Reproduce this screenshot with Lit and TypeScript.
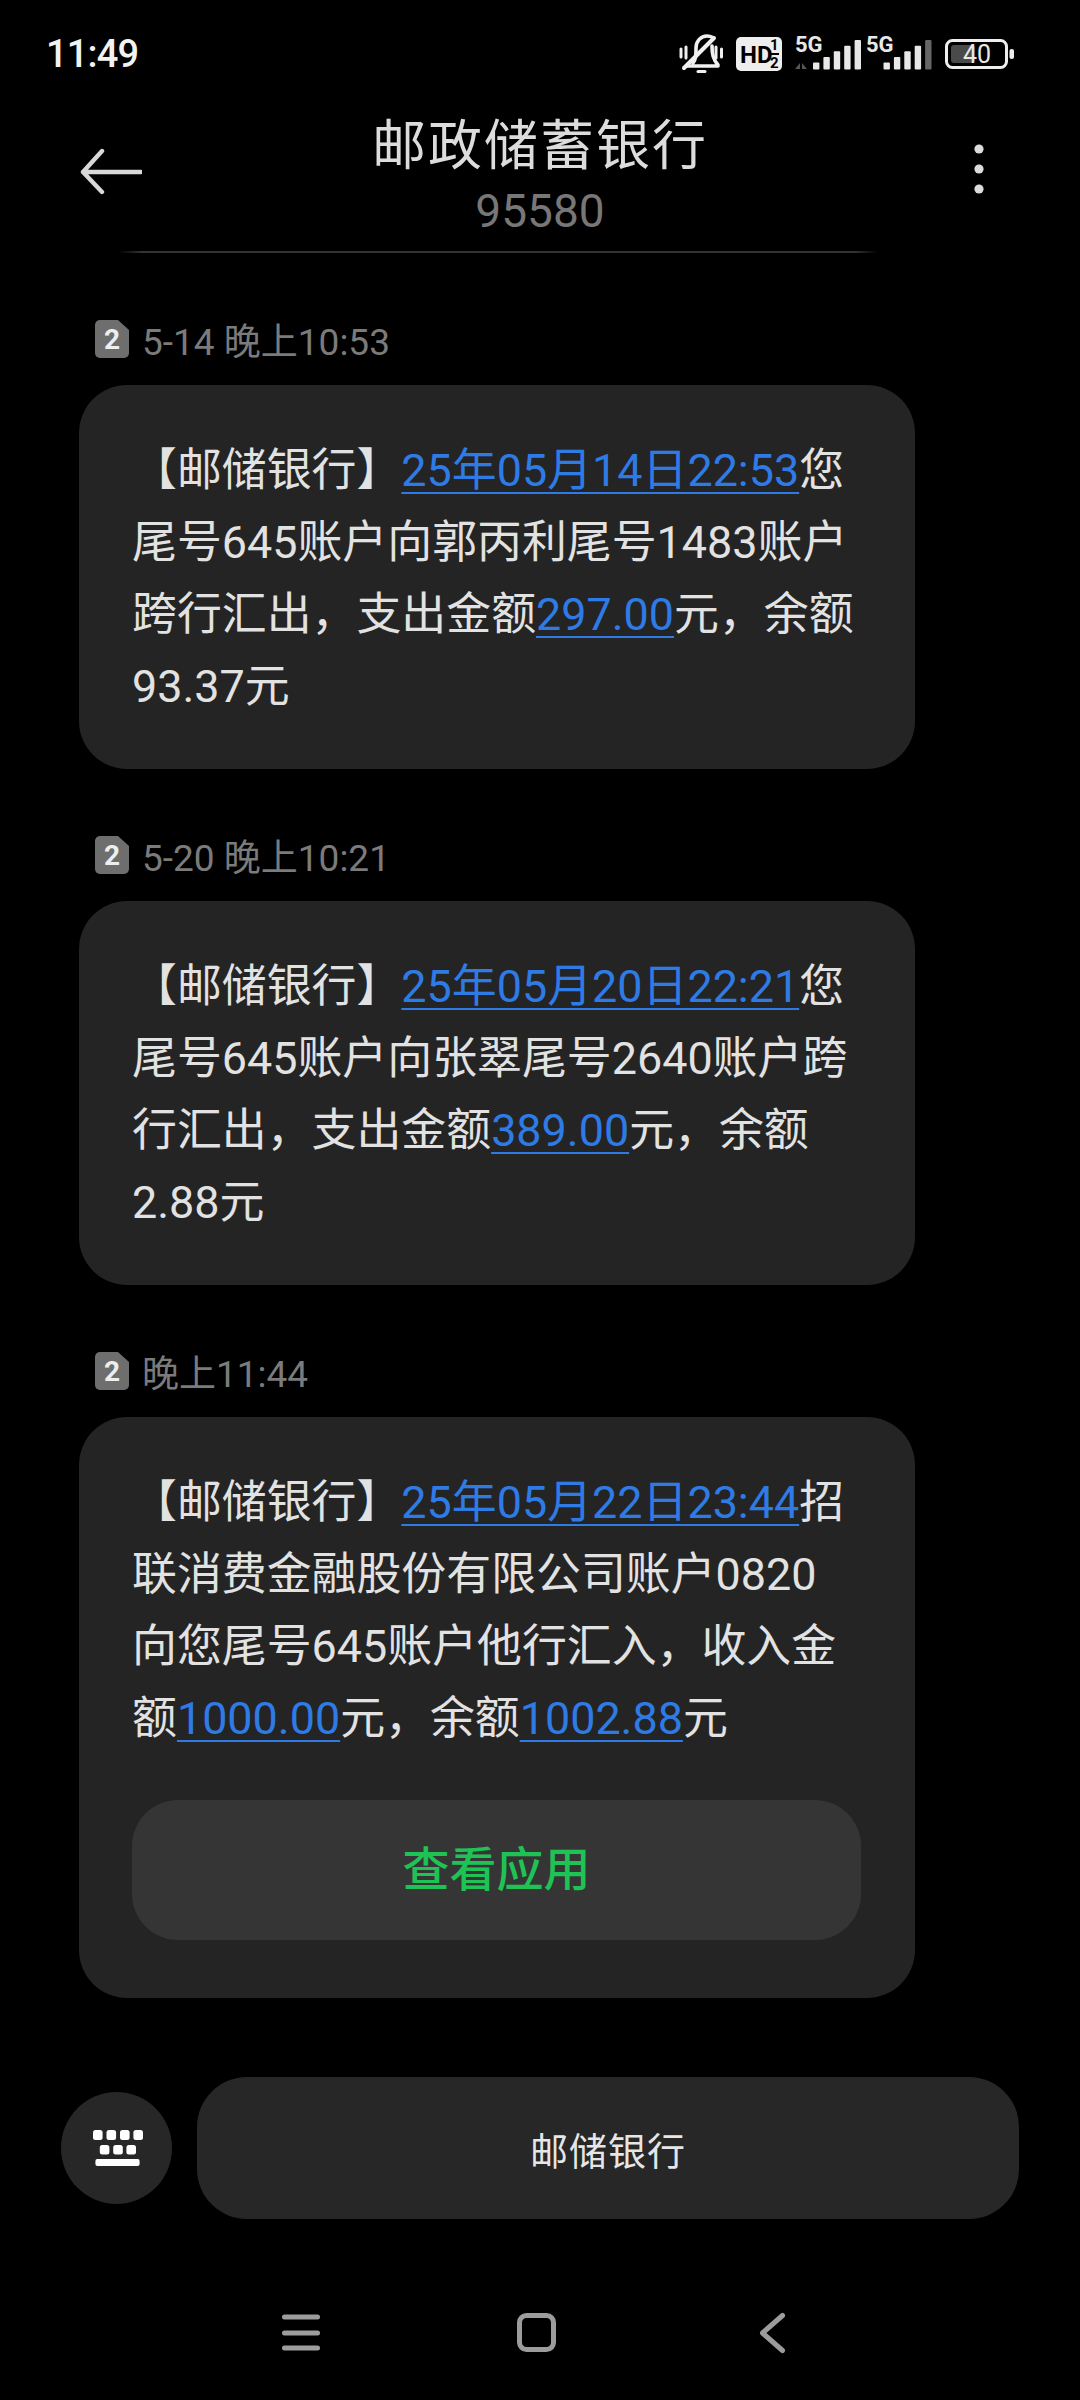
import { LitElement, html, css, svg } from "lit";
import { customElement } from "lit/decorators.js";

const sim = html`<svg class="sim" viewBox="0 0 34 38" width="34" height="38"><path d="M5 0H23L34 10V33a5 5 0 0 1-5 5H5a5 5 0 0 1-5-5V5a5 5 0 0 1 5-5Z" fill="#6e6e6e"/><text x="17" y="29" text-anchor="middle" class="simt">2</text></svg>`;

type Part = string | { l: string };
const L = (l: string) => ({ l });
const parts = (p: Part[]) => p.map((x) => typeof x === "string" ? x : html`<span class="lnk">${x.l}</span>`);

const bars = (x: number, lastDim: boolean) => [0,1,2,3,4].map((i) => {
  const h = 7 + i * 5.6;
  return svg`<rect x=${x + i * 10.4} y=${69.5 - h} width="6.4" height=${h} rx="1" fill=${lastDim && i === 4 ? "#666" : "#e8e8e8"}/>`;
});

@customElement("app-root")
export class AppRoot extends LitElement {
  static styles = css`
    :host { display: block; width: 1080px; height: 2400px; background: #000; overflow: hidden;
      font-family: Roboto, "Noto Sans CJK SC", sans-serif; color: #e3e3e3; }
    .page { display: flex; flex-direction: column; height: 2400px; }
    .status { height: 100px; display: flex; justify-content: space-between; align-items: flex-start; flex: none; }
    .clock { font-size: 38px; font-weight: 500; letter-spacing: -0.8px; color: #f2f2f2; margin: 33px 0 0 46px; line-height: 42px; }
    .sicons { display: block; }
    .hd { font: 700 24px Roboto, sans-serif; fill: #000; }
    .frac { font: 700 15px Roboto, sans-serif; fill: #000; }
    .g { font: 700 22px Roboto, sans-serif; fill: #e8e8e8; }
    .bt { font: 400 25px Roboto, sans-serif; fill: #e8e8e8; }
    .hdr { height: 151px; display: grid; grid-template-columns: 136px 1fr 136px; flex: none; }
    .back { margin: 48px 0 0 80px; display: block; }
    .title { text-align: center; }
    .name { font-size: 54px; line-height: 64px; letter-spacing: 2px; margin-top: 15px; color: #dcdcdc; }
    .num { font-size: 46px; line-height: 50px; color: #777; margin-top: 7px; }
    .more { margin: 43px 0 0 29px; display: block; }
    .rule { height: 2px; margin: 0 202px 0 119px; flex: none; background: linear-gradient(90deg, #000, #333 3%, #333 97%, #000); }
    .list { display: flex; flex-direction: column; padding-left: 79px; flex: none; }
    .meta { display: flex; align-items: center; gap: 13px; height: 40px; margin: 66px 0 26px 16px; font-size: 37px; color: #7b7b7b; }
    .sim { display: block; flex: none; }
    .simt { font: 700 28px Roboto, sans-serif; fill: #eee; }
    .bubble { width: 836px; box-sizing: border-box; background: #242424; border-radius: 48px; padding: 50px 56px 46px 53px; font-size: 44.9px; line-height: 72px; color: #e2e2e2; }
    .lnk { color: #2f7be6; text-decoration: underline; text-decoration-thickness: 2px; text-underline-offset: 6px; }
    .btn { height: 140px; margin: 45px -2px 12px 0; border-radius: 46px; background: #353535; display: flex; align-items: center; justify-content: center; color: #1fc255; font-size: 47px; font-weight: 500; line-height: 60px; }
    .compose { display: flex; align-items: flex-start; gap: 25px; margin: 79px 0 0 61px; flex: none; }
    .kb { width: 111px; height: 112px; margin-top: 15px; border-radius: 50%; background: #272727; display: flex; align-items: center; justify-content: center; flex: none; }
    .kb svg { margin-left: 3px; display: block; }
    .sug { width: 822px; height: 142px; border-radius: 50px; background: #272727; display: flex; align-items: center; justify-content: center; font-size: 38px; color: #e6e6e6; letter-spacing: 1px; }
    .nav { display: block; margin: 89px 0 0 278px; flex: none; }
  `;

  render() {
    return html`<div class="page">
      <div class="status">
        <div class="clock">11:49</div>
        <svg class="sicons" width="440" height="100" viewBox="0 0 440 100">
          <g fill="none" stroke="#f0f0f0" stroke-width="3.6" stroke-linecap="round" stroke-linejoin="round">
            <path d="M47 66H78M53 63c3-4 3-8 3-15 0-7 5-12 11-12 2 0 4 .5 6 1.500M72 46c0 8 1 13 6 19"/>
            <path d="M44 68 74 38" stroke-width="4"/>
            <path d="M41 49v8M46 47v11M76 47v11M81.500 49v8" stroke-width="3"/>
            <path d="M58 71.500h7" stroke-width="3"/>
          </g>
          <rect x="96" y="37" width="46" height="34" rx="5" fill="#eeeeee"/>
          <text x="100" y="63" class="hd">HD</text>
          <text x="130" y="50" class="frac">1</text><text x="130" y="68" class="frac">2</text>
          <rect x="130" y="53" width="9" height="2" fill="#000"/>
          <text x="155" y="52" class="g">5G</text>
          <path d="M155 69l5-6v6ZM162 63l5 6h-5Z" fill="#555"/>
          ${bars(173, false)}
          <text x="226" y="52" class="g">5G</text>
          ${bars(243.500, true)}
          <rect x="306.500" y="40.500" width="60" height="27" rx="6" fill="none" stroke="#eee" stroke-width="3"/>
          <rect x="311" y="45" width="24" height="18" rx="3" fill="#4a4a4a"/>
          <text x="337" y="63" text-anchor="middle" class="bt">40</text>
          <rect x="369.500" y="49" width="4.500" height="10" rx="2" fill="#eee"/>
        </svg>
      </div>
      <div class="hdr">
        <svg class="back" width="62" height="48" viewBox="0 0 62 48" fill="none" stroke="#d8d8d8" stroke-width="4.4" stroke-linecap="round" stroke-linejoin="round"><path d="M61 24H3M22 3 3 24 22 44"/></svg>
        <div class="title">
          <div class="name">邮政储蓄银行</div>
          <div class="num">95580</div>
        </div>
        <svg class="more" width="12" height="52" viewBox="0 0 12 52" fill="#dcdcdc"><circle cx="6" cy="6" r="4.600"/><circle cx="6" cy="26" r="4.600"/><circle cx="6" cy="46" r="4.600"/></svg>
      </div>
      <div class="rule"></div>
      <div class="list">
        <div class="meta">${sim}<span>5-14 晚上10:53</span></div>
        <div class="bubble">【邮储银行】${parts([L("25年05月14日22:53"), "您尾号645账户向郭丙利尾号1483账户跨行汇出，支出金额", L("297.00"), "元，余额93.37元"])}</div>
        <div class="meta">${sim}<span>5-20 晚上10:21</span></div>
        <div class="bubble">【邮储银行】${parts([L("25年05月20日22:21"), "您尾号645账户向张翠尾号2640账户跨行汇出，支出金额", L("389.00"), "元，余额2.88元"])}</div>
        <div class="meta">${sim}<span>晚上11:44</span></div>
        <div class="bubble">【邮储银行】${parts([L("25年05月22日23:44"), "招联消费金融股份有限公司账户0820向您尾号645账户他行汇入，收入金额", L("1000.00"), "元，余额", L("1002.88"), "元"])}
          <div class="btn">查看应用</div>
        </div>
      </div>
      <div class="compose">
        <div class="kb"><svg width="50" height="36" viewBox="0 0 50 36" fill="#fff"><rect x="0" y="0" width="9.600" height="10" rx="2.500"/><rect x="13.500" y="0" width="9.600" height="10" rx="2.500"/><rect x="27" y="0" width="9.600" height="10" rx="2.500"/><rect x="40.400" y="0" width="9.600" height="10" rx="2.500"/><rect x="6.800" y="15" width="9.600" height="9.500" rx="2.500"/><rect x="20.200" y="15" width="9.600" height="9.500" rx="2.500"/><rect x="33.400" y="15" width="9.600" height="9.500" rx="2.500"/><rect x="2.400" y="29" width="44.200" height="7" rx="2"/></svg></div>
        <div class="sug">邮储银行</div>
      </div>
      <svg class="nav" width="520" height="50" viewBox="0 0 520 50" fill="none" stroke="#9c9c9c" stroke-width="5" stroke-linecap="round" stroke-linejoin="round">
        <path d="M6.500 9H39.500M6.500 25H39.500M6.500 40H39.500"/>
        <rect x="241.500" y="7.500" width="34" height="34" rx="7"/>
        <path d="M504.500 7.500 484.500 25 504.500 42.500"/>
      </svg>
    </div>`;
  }
}
